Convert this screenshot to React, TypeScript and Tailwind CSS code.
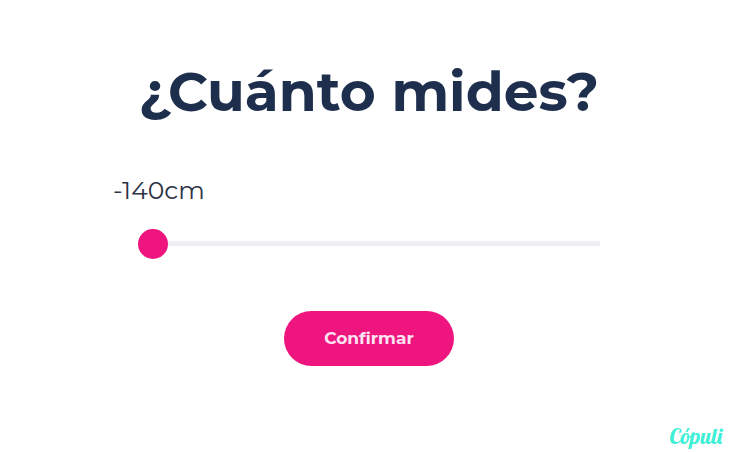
import { useState } from "react";

const MIN_HEIGHT = 140;
const MAX_HEIGHT = 210;

const App = () => {
  const [height, setHeight] = useState(MIN_HEIGHT);

  const label = height === MIN_HEIGHT ? `-${height}cm` : `${height}cm`;

  return (
    <div className="min-h-screen flex flex-col bg-white pl-2 font-['Montserrat','Inter',sans-serif] text-[#1e2f4d]">
      <main className="flex-1 flex flex-col items-center pt-14">
        <h1 className="text-center text-[55px] leading-[72px] font-bold">
          ¿Cuánto mides?
        </h1>

        <form
          className="w-full max-w-lg flex flex-col items-center mt-11"
          onSubmit={(e) => e.preventDefault()}
        >
          <label
            className="self-start text-[25px] leading-9 text-[#2b3345]"
            htmlFor="height"
          >
            {label}
          </label>

          <div className="w-full flex mt-[19px] px-[25px]">
            <input
              className="w-full h-8 appearance-none bg-transparent cursor-pointer [&::-webkit-slider-runnable-track]:h-[5px] [&::-webkit-slider-runnable-track]:bg-[#f0f0f4] [&::-webkit-slider-thumb]:appearance-none [&::-webkit-slider-thumb]:w-[30px] [&::-webkit-slider-thumb]:h-[30px] [&::-webkit-slider-thumb]:-mt-3 [&::-webkit-slider-thumb]:rounded-full [&::-webkit-slider-thumb]:bg-[#ee157f]"
              id="height"
              type="range"
              min={MIN_HEIGHT}
              max={MAX_HEIGHT}
              value={height}
              onChange={(e) => setHeight(Number(e.target.value))}
            />
          </div>

          <button
            className="mt-[52px] px-10 py-4 rounded-full bg-[#ee157f] text-[17px] leading-[23px] font-bold text-[#fde3f1] cursor-pointer"
            type="submit"
          >
            Confirmar
          </button>
        </form>
      </main>

      <footer className="flex justify-end pr-2">
        <a
          className="font-['Lobster','Liberation_Serif',serif] text-[22px] leading-8 text-[#41efd6]"
          href="#copuli"
        >
          Cópuli
        </a>
      </footer>
    </div>
  );
};

export default App;
